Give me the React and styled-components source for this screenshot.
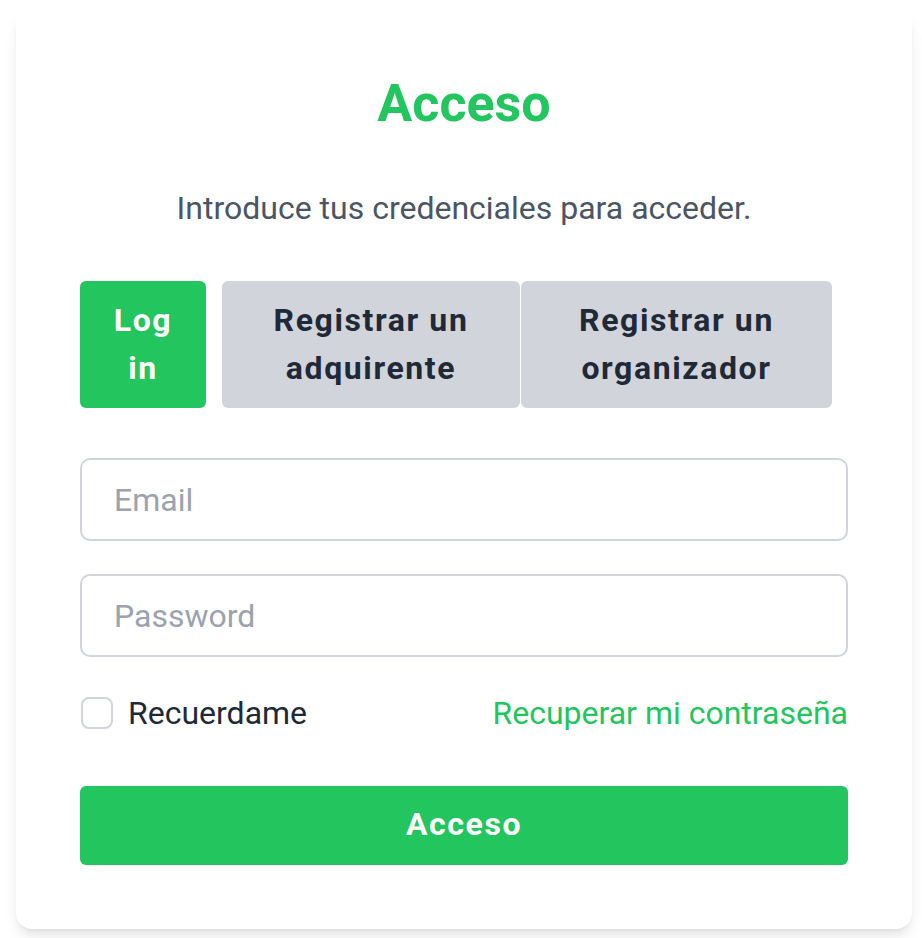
import React from 'react';
import styled, { createGlobalStyle } from 'styled-components';

const GREEN = '#22c55e';

const GlobalStyle = createGlobalStyle`
  html, body {
    margin: 0;
    padding: 0;
    background: #ffffff;
    font-family: Roboto, "Liberation Sans", Arial, sans-serif;
  }
`;

const Page = styled.div`
  padding: 8px 10px 10px 16px;
`;

const Card = styled.div`
  width: 896px;
  box-sizing: border-box;
  padding: 64px 64px 64px;
  background: #fff;
  border-radius: 16px;
  box-shadow: 0 10px 15px -3px rgba(0, 0, 0, 0.1), 0 4px 6px -4px rgba(0, 0, 0, 0.1);
`;

const Title = styled.h1`
  margin: 0;
  text-align: center;
  color: ${GREEN};
  font-size: 52px;
  line-height: 64px;
  font-weight: 700;
`;

const Subtitle = styled.p`
  margin: 48px 0 0;
  text-align: center;
  color: #4b5563;
  font-size: 32px;
  line-height: 48px;
`;

const Tabs = styled.div`
  display: flex;
  margin-top: 49px;
`;

const Tab = styled.button`
  flex: none;
  width: ${(p) => p.$w}px;
  margin-right: ${(p) => p.$mr}px;
  box-sizing: border-box;
  padding: 15px 30px 16px;
  border: none;
  border-radius: 6px;
  background: ${(p) => (p.$active ? GREEN : '#d1d5db')};
  color: ${(p) => (p.$active ? '#fff' : '#1f2937')};
  font-family: inherit;
  font-size: 32px;
  line-height: 48px;
  font-weight: 700;
  letter-spacing: 0.05em;
  text-align: center;
`;

const Form = styled.form`
  display: flex;
  flex-direction: column;
  margin-top: 50px;
`;

const Input = styled.input`
  box-sizing: border-box;
  height: 83px;
  width: 100%;
  padding: 0 32px;
  border: 2px solid #d1d5db;
  border-radius: 10px;
  font-family: inherit;
  font-size: 32px;
  color: #1f2937;
  outline: none;
  & + & {
    margin-top: 33px;
  }
  &::placeholder {
    color: #9ca3af;
  }
`;

const Row = styled.div`
  display: flex;
  align-items: center;
  justify-content: space-between;
  margin-top: 36px;
`;

const Remember = styled.label`
  display: flex;
  align-items: center;
  gap: 15px;
  color: #1f2937;
  font-size: 32px;
  line-height: 40px;
`;

const Box = styled.span`
  display: inline-block;
  width: 32px;
  height: 32px;
  margin-left: 1px;
  box-sizing: border-box;
  border: 2px solid #d1d5db;
  border-radius: 8px;
  background: #fff;
`;

const Link = styled.a`
  color: ${GREEN};
  font-size: 32px;
  line-height: 40px;
  text-decoration: none;
`;

const Submit = styled.button`
  margin-top: 53px;
  height: 79px;
  width: 100%;
  padding: 0 0 4px;
  border: none;
  border-radius: 6px;
  background: ${GREEN};
  color: #fff;
  font-family: inherit;
  font-size: 32px;
  font-weight: 700;
  letter-spacing: 0.05em;
`;

export default function App() {
  return (
    <Page>
      <GlobalStyle />
      <Card>
        <Title>Acceso</Title>
        <Subtitle>Introduce tus credenciales para acceder.</Subtitle>
        <Tabs>
          <Tab $active $w={126} $mr={16}>Log in</Tab>
          <Tab $w={298} $mr={1}>Registrar un adquirente</Tab>
          <Tab $w={311} $mr={0}>Registrar un organizador</Tab>
        </Tabs>
        <Form onSubmit={(e) => e.preventDefault()}>
          <Input type="email" placeholder="Email" />
          <Input type="password" placeholder="Password" />
          <Row>
            <Remember>
              <Box />
              Recuerdame
            </Remember>
            <Link href="#">Recuperar mi contraseña</Link>
          </Row>
          <Submit type="submit">Acceso</Submit>
        </Form>
      </Card>
    </Page>
  );
}
